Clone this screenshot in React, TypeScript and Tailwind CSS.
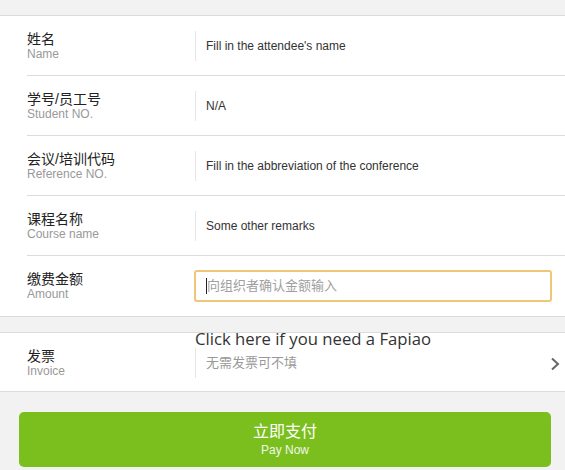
import React from 'react';

const rows = [
  { zh: '姓名', en: 'Name', value: "Fill in the attendee's name" },
  { zh: '学号/员工号', en: 'Student NO.', value: 'N/A' },
  { zh: '会议/培训代码', en: 'Reference NO.', value: 'Fill in the abbreviation of the conference' },
  { zh: '课程名称', en: 'Course name', value: 'Some other remarks' },
];

function Label({ zh, en }: { zh: string; en: string }) {
  return (
    <div className="w-[168px] shrink-0 flex flex-col">
      <span className="text-[14px] leading-[16px] text-[#222]">{zh}</span>
      <span className="text-[12px] leading-[14px] text-[#999]">{en}</span>
    </div>
  );
}

export default function App() {
  return (
    <div
      className="min-h-[470px] w-full bg-[#f2f2f2] pb-[3px]"
      style={{ fontFamily: '"Liberation Sans", Arial, "Noto Sans CJK SC", sans-serif' }}
    >
      {/* top band */}
      <div className="h-[16px] border-b border-[#dcdcdc]" />

      {/* form */}
      <div className="bg-white border-b border-[#dcdcdc]">
        {rows.map((r) => (
          <div key={r.en} className="pl-[27px]">
            <div className="h-[60px] flex items-center border-b border-[#dcdcdc]">
              <Label zh={r.zh} en={r.en} />
              <div className="h-[30px] border-l border-[#e6e6e6] pl-[10px] flex items-center">
                <span className="text-[12px] text-[#333]">{r.value}</span>
              </div>
            </div>
          </div>
        ))}
        <div className="pl-[27px]">
          <div className="h-[60px] flex items-center">
            <Label zh="缴费金额" en="Amount" />
            <div className="-ml-px mr-[13px] flex-1 h-[32px] rounded-[3px] border-2 border-[#f0c677] flex items-center pl-[10px]">
              <span className="w-px h-[16px] bg-[#222]" />
              <span className="text-[13px] text-[#a0a0a0]">向组织者确认金额输入</span>
            </div>
          </div>
        </div>
      </div>

      {/* gap */}
      <div className="h-[15px]" />

      {/* invoice */}
      <div className="bg-white border-y border-[#dcdcdc] pl-[27px]">
        <div className="h-[58px] flex items-center pt-[2px]">
          <Label zh="发票" en="Invoice" />
          <div className="relative flex-1 flex items-center">
            <span
              className="absolute bottom-full left-0 mb-[-1px] text-[16.7px] leading-[20px] text-[#333] whitespace-nowrap"
              style={{ fontFamily: '"Open Sans", sans-serif' }}
            >
              Click here if you need a Fapiao
            </span>
            <div className="h-[30px] border-l border-[#e6e6e6] pl-[10px] flex items-center flex-1">
              <span className="text-[13px] text-[#999]">无需发票可不填</span>
            </div>
            <svg width="10" height="14" viewBox="0 0 10 14" className="mr-[5px] mt-[1px]">
              <polyline points="2,1.5 8,7 2,12.5" fill="none" stroke="#666" strokeWidth="2" />
            </svg>
          </div>
        </div>
      </div>

      {/* pay button */}
      <div className="pt-[20px] pl-[19px] pr-[14px]">
        <button className="w-full h-[55px] rounded-[5px] bg-[#7abf1e] flex flex-col items-center justify-center">
          <span className="text-[16px] leading-[20px] text-white">立即支付</span>
          <span className="text-[12px] leading-[16px] text-[#f2f7e8]">Pay Now</span>
        </button>
      </div>
    </div>
  );
}
